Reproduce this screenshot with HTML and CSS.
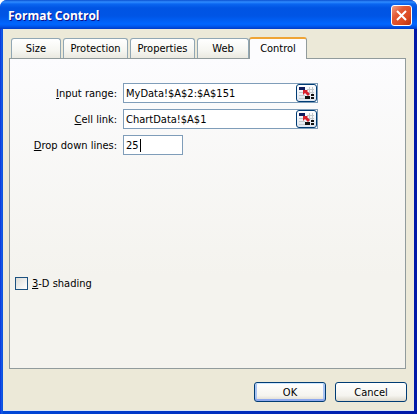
FILE: index.html
```html
<!DOCTYPE html>
<html lang="en">
<head>
  <meta charset="UTF-8">
  <meta name="viewport" content="width=device-width, initial-scale=1.0">
  <title>Format Control</title>
  <link rel="stylesheet" href="styles.css">
</head>
<body>

  <form class="window">
    <header class="titlebar">
      <h1>Format Control</h1>
      <button class="close" type="button" aria-label="Close">
        <svg width="11" height="11" viewBox="0 0 11 11"><path d="M1 1l9 9M10 1l-9 9" stroke="#fff" stroke-width="2"/></svg>
      </button>
    </header>

    <main class="content">
      <nav class="tabs" role="tablist">
        <button class="tab size" type="button" role="tab">Size</button>
        <button class="tab wide" type="button" role="tab">Protection</button>
        <button class="tab wide" type="button" role="tab">Properties</button>
        <button class="tab web" type="button" role="tab">Web</button>
        <button class="tab active" type="button" role="tab" aria-selected="true">Control</button>
      </nav>

      <section class="panel">
        <div class="fields">
          <label for="range"><u>I</u>nput range:</label>
          <div class="field">
            <input type="text" id="range" value="MyData!$A$2:$A$151">
            <button class="picker" type="button" aria-label="Select input range">
              <svg width="17" height="14" viewBox="0 0 17 14">
                <path d="M1 6.500h15M1 9.500h6M1 12.500h6M9 3.500h7M11.500 1v7M14.500 1v7" stroke="#c3c9cc" fill="none"/>
                <path d="M1 1h6v3H1z" fill="#101c5c"/>
                <path d="M7 10h5v3H7zM13 8h3v2h-3zM13 11h3v2h-3z" fill="#111"/>
                <path d="M5 4h5L9 5l3 3-2 2-3-3-2 2z" fill="#d8202c"/>
              </svg>
            </button>
          </div>

          <label for="link"><u>C</u>ell link:</label>
          <div class="field">
            <input type="text" id="link" value="ChartData!$A$1">
            <button class="picker" type="button" aria-label="Select cell link">
              <svg width="17" height="14" viewBox="0 0 17 14">
                <path d="M1 6.500h15M1 9.500h6M1 12.500h6M9 3.500h7M11.500 1v7M14.500 1v7" stroke="#c3c9cc" fill="none"/>
                <path d="M1 1h6v3H1z" fill="#101c5c"/>
                <path d="M7 10h5v3H7zM13 8h3v2h-3zM13 11h3v2h-3z" fill="#111"/>
                <path d="M5 4h5L9 5l3 3-2 2-3-3-2 2z" fill="#d8202c"/>
              </svg>
            </button>
          </div>

          <label for="lines"><u>D</u>rop down lines:</label>
          <div class="field short">
            <input type="text" id="lines" value="25">
            <span class="caret"></span>
          </div>
        </div>

        <div class="shading">
          <input type="checkbox" id="shading">
          <label for="shading"><u>3</u>-D shading</label>
        </div>
      </section>

      <footer class="actions">
        <button class="action ok" type="submit">OK</button>
        <button class="action" type="button">Cancel</button>
      </footer>
    </main>
  </form>

</body>
</html>
```
FILE: styles.css
```css
* {
  box-sizing: border-box;
}
body {
  margin: 0;
  background: #fff;
  color: #000;
}
body, button, input {
  font-family: Tahoma, "DejaVu Sans Condensed", sans-serif;
  font-size: 11px;
}
button, input {
  margin: 0;
  padding: 0;
  color: #000;
}
svg {
  display: block;
}
.window {
  display: flex;
  flex-direction: column;
  min-height: 100vh;
  padding: 0 3px 3px;
  background: linear-gradient(to right, #0831d9, #1660e8 2px, #0048d8 3px, #0030c0 50%, #0018a8);
  border-radius: 7px 7px 0 0;
  overflow: hidden;
}

/* title bar */
.titlebar {
  display: flex;
  align-items: center;
  justify-content: space-between;
  height: 29px;
  margin: 0 -3px;
  padding: 2px 5px 0 8px;
  background: linear-gradient(#0a50d0, #2f8cff 2px, #0a66f0 4px, #0054e3 8px, #0055e5 16px, #0066ff 24px, #005af0 26px, #003cc8);
}
.titlebar h1 {
  margin: 0;
  color: #fff;
  font-family: "Trebuchet MS", "Open Sans", sans-serif;
  font-size: 12px;
  line-height: 18px;
  text-shadow: 1px 1px #0f1089;
}
.close {
  display: grid;
  place-items: center;
  width: 21px;
  height: 21px;
  border: 1px solid #fff;
  border-radius: 3px;
  background: linear-gradient(135deg, #f0a088, #e35a35 35%, #dc4a20 70%, #b83010);
}

.content {
  display: flex;
  flex: 1;
  flex-direction: column;
  padding: 8px 7px 8px 6px;
  background: #ece9d8;
  border: solid #dce6f4;
  border-width: 0 0 1px;
}

/* tabs */
.tabs {
  display: flex;
  align-items: flex-end;
  gap: 2px;
  height: 22px;
  margin-bottom: -1px;
  padding-left: 2px;
}
.tab {
  height: 20px;
  margin-bottom: 1px;
  border: 1px solid #91a7b4;
  border-bottom: 0;
  border-radius: 3px 3px 0 0;
  background: linear-gradient(#fff, #f6f6f1 60%, #eae9e0);
}
.size {
  width: 50px;
}
.wide {
  width: 65px;
}
.web {
  width: 52px;
}
.active {
  position: relative;
  width: 58px;
  height: 22px;
  margin: 0 0 0 -2px;
  padding-bottom: 2px;
  border-color: #919b9c;
  border-top: 2px solid #efa436;
  background: #fcfcfe;
}

.panel {
  flex: 1;
  margin-right: 1px;
  padding: 24px 5px;
  border: 1px solid #919b9c;
  background: linear-gradient(#fcfcfe, #f4f3ee 70%);
}
.fields {
  display: grid;
  grid-template-columns: 102px minmax(0, 195px);
  gap: 6px;
  align-items: center;
}
.fields label {
  text-align: right;
}
.field {
  display: flex;
  position: relative;
  height: 20px;
  border: 1px solid #7f9db9;
  background: #fff;
}
.field input {
  flex: 1;
  min-width: 0;
  padding-left: 2px;
  border: 0;
  outline: 0;
  background: none;
}
.short {
  width: 60px;
}
.caret {
  position: absolute;
  top: 3px;
  left: 16px;
  width: 1px;
  height: 13px;
  background: #000;
}
.picker {
  display: grid;
  place-items: center;
  width: 21px;
  border: 1px solid #003c74;
  border-radius: 3px;
  background: linear-gradient(#fff, #dfe6f0);
}
.shading {
  display: flex;
  align-items: center;
  gap: 4px;
  margin-top: 122px;
}
.shading input {
  appearance: none;
  width: 13px;
  height: 13px;
  border: 1px solid #1c5180;
  background: linear-gradient(135deg, #dcdcd7, #fff);
}

/* OK and Cancel */
.actions {
  display: flex;
  justify-content: flex-end;
  gap: 9px;
  padding-top: 13px;
}
.action {
  width: 72px;
  height: 20px;
  border: 1px solid #003c74;
  border-radius: 3px;
  background: linear-gradient(#fff, #f5f4ef 70%, #dcd8cc);
}
.ok {
  box-shadow: inset 0 1px #cee7ff, inset 0 -2px #8fa9ee, inset 2px 0 #a9c4f2, inset -2px 0 #a9c4f2;
}
```
